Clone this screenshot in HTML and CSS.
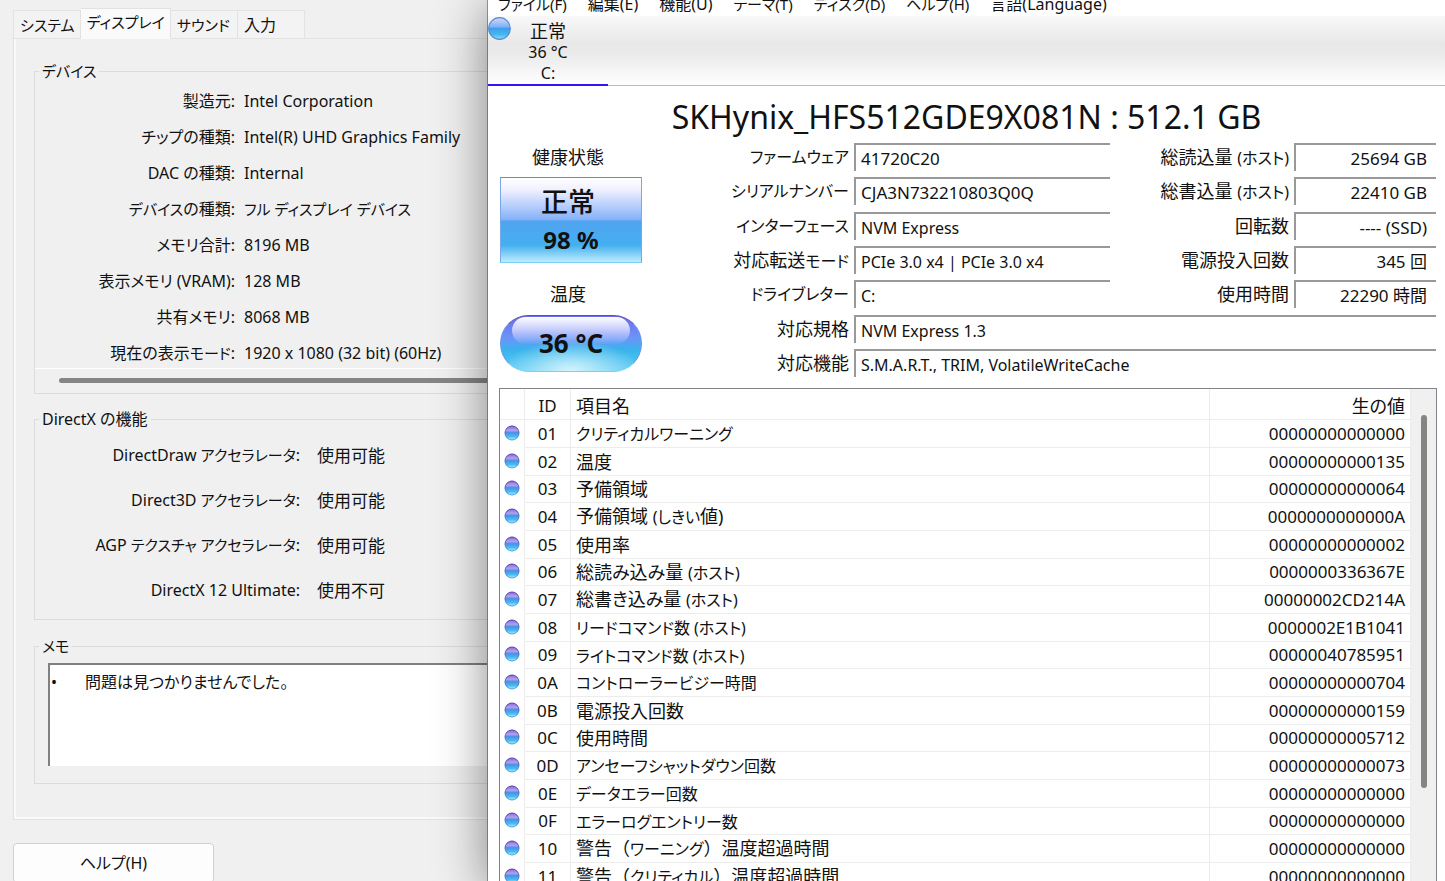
FILE: index.html
```html
<!DOCTYPE html>
<html lang="ja">
<head>
<meta charset="utf-8">
<title>SKHynix_HFS512GDE9X081N : 512.1 GB</title>
<link rel="stylesheet" href="styles.css">
</head>
<body>
<svg class="defs" aria-hidden="true">
  <defs>
    <linearGradient id="ball-fill" x1="0" y1="0" x2="0" y2="1">
      <stop offset="0" stop-color="#8a62dc"/>
      <stop offset="0.3" stop-color="#b0a4ec"/>
      <stop offset="0.48" stop-color="#4a90e4"/>
      <stop offset="0.75" stop-color="#46bcf2"/>
      <stop offset="1" stop-color="#b4ecfc"/>
    </linearGradient>
    <linearGradient id="ball-rim" x1="0" y1="0" x2="0" y2="1">
      <stop offset="0" stop-color="#5a3cb4"/>
      <stop offset="0.5" stop-color="#4a68c8"/>
      <stop offset="1" stop-color="#48a8e0"/>
    </linearGradient>
    <linearGradient id="orb-fill" x1="0" y1="0" x2="0" y2="1">
      <stop offset="0" stop-color="#d4d8fc"/>
      <stop offset="0.44" stop-color="#7cb0f4"/>
      <stop offset="0.48" stop-color="#3c9cec"/>
      <stop offset="0.78" stop-color="#48b8f0"/>
      <stop offset="1" stop-color="#8cdcf8"/>
    </linearGradient>
    <symbol id="ball" viewBox="0 0 16 16"><circle cx="8" cy="8" r="7" fill="url(#ball-fill)" stroke="url(#ball-rim)"/></symbol>
    <symbol id="orb" viewBox="0 0 22 22"><circle cx="11" cy="11" r="10.4" fill="url(#orb-fill)" stroke="#5a88d0"/></symbol>
  </defs>
</svg>
<div class="desktop">
  <main class="dxdiag">
    <div class="tabs" role="tablist">
      <button class="tab kana-s" role="tab">システム</button>
      <button class="tab tab-active kana-s" role="tab" aria-selected="true">ディスプレイ</button>
      <button class="tab kana-s" role="tab">サウンド</button>
      <button class="tab" role="tab">入力</button>
    </div>
    <div class="panel" role="tabpanel">
      <fieldset class="group group-device">
        <legend class="kana-s">デバイス</legend>
        <dl class="pairs device-list">
          <dt>製造元:</dt><dd>Intel Corporation</dd>
          <dt>チップの種類:</dt><dd>Intel(R) UHD Graphics Family</dd>
          <dt>DAC の種類:</dt><dd>Internal</dd>
          <dt><span class="kana-s">デバイス</span>の種類:</dt><dd class="kana-s">フル ディスプレイ デバイス</dd>
          <dt>メモリ合計:</dt><dd>8196 MB</dd>
          <dt>表示メモリ (VRAM):</dt><dd>128 MB</dd>
          <dt>共有メモリ:</dt><dd>8068 MB</dd>
          <dt>現在の表示<span class="kana-s">モード</span>:</dt><dd>1920 x 1080 (32 bit) (60Hz)</dd>
        </dl>
        <div class="hscroll"><div class="hscroll-thumb"></div></div>
      </fieldset>
      <fieldset class="group group-directx">
        <legend>DirectX の機能</legend>
        <dl class="pairs directx-list">
          <dt>DirectDraw <span class="kana-s">アクセラレータ</span>:</dt><dd>使用可能</dd>
          <dt>Direct3D <span class="kana-s">アクセラレータ</span>:</dt><dd>使用可能</dd>
          <dt>AGP <span class="kana-s">テクスチャ アクセラレータ</span>:</dt><dd>使用可能</dd>
          <dt>DirectX 12 Ultimate:</dt><dd>使用不可</dd>
        </dl>
      </fieldset>
      <fieldset class="group group-memo">
        <legend class="kana-s">メモ</legend>
        <div class="memo-wrap"><textarea class="memo" readonly aria-label="メモ">•&#9;問題は見つかりませんでした。</textarea></div>
      </fieldset>
    </div>
    <button class="help">ヘルプ(H)</button>
  </main>

  <section class="diskinfo">
    <nav class="menu">
      <button class="kana-s">ファイル(F)</button><button>編集(E)</button><button>機能(U)</button><button class="kana-s">テーマ(T)</button><button class="kana-s">ディスク(D)</button><button class="kana-s">ヘルプ(H)</button><button>言語(Language)</button>
    </nav>
    <div class="drives">
      <button class="drive">
        <svg class="orb" aria-hidden="true"><use href="#orb"/></svg>
        <span class="drive-text"><span class="drive-state">正常</span><span>36 °C</span><span>C:</span></span>
      </button>
    </div>
    <h1 class="model">SKHynix_HFS512GDE9X081N : 512.1 GB</h1>
    <div class="summary">
      <div class="status">
        <span class="status-label">健康状態</span>
        <button class="health"><span class="health-word">正常</span><span>98 %</span></button>
        <span class="status-label temp-label">温度</span>
        <button class="temp"><span class="temp-text">36 °C</span></button>
      </div>
      <div class="specs">
        <label class="kana" for="fw">ファームウェア</label><input id="fw" class="code" readonly value="41720C20">
        <label for="rd">総読込量 <span class="kana">(ホスト)</span></label><input id="rd" class="num" readonly value="25694 GB">
        <label class="kana" for="sn">シリアルナンバー</label><input id="sn" class="code" readonly value="CJA3N732210803Q0Q">
        <label for="wr">総書込量 <span class="kana">(ホスト)</span></label><input id="wr" class="num" readonly value="22410 GB">
        <label class="kana" for="if">インターフェース</label><input id="if" readonly value="NVM Express">
        <label for="rpm">回転数</label><input id="rpm" class="num" readonly value="---- (SSD)">
        <label for="tm">対応転送<span class="kana">モード</span></label><input id="tm" readonly value="PCIe 3.0 x4 | PCIe 3.0 x4">
        <label for="pc">電源投入回数</label><input id="pc" class="num" readonly value="345 回">
        <label class="kana" for="dl">ドライブレター</label><input id="dl" readonly value="C:">
        <label for="ph">使用時間</label><input id="ph" class="num" readonly value="22290 時間">
        <label for="std">対応規格</label><input id="std" class="wide" readonly value="NVM Express 1.3">
        <label for="ft">対応機能</label><input id="ft" class="wide" readonly value="S.M.A.R.T., TRIM, VolatileWriteCache">
      </div>
    </div>
    <div class="smart">
      <table class="attrs">
        <colgroup><col class="c-icon"><col class="c-id"><col><col class="c-raw"></colgroup>
        <thead><tr><th></th><th class="id">ID</th><th>項目名</th><th class="raw">生の値</th></tr></thead>
        <tbody>
          <tr><td><svg class="ball"><use href="#ball"/></svg></td><td class="id">01</td><td><span class="kana">クリティカルワーニング</span></td><td class="raw">00000000000000</td></tr>
          <tr><td><svg class="ball"><use href="#ball"/></svg></td><td class="id">02</td><td>温度</td><td class="raw">00000000000135</td></tr>
          <tr><td><svg class="ball"><use href="#ball"/></svg></td><td class="id">03</td><td>予備領域</td><td class="raw">00000000000064</td></tr>
          <tr><td><svg class="ball"><use href="#ball"/></svg></td><td class="id">04</td><td>予備領域 <span class="kana">(しきい</span>値)</td><td class="raw">0000000000000A</td></tr>
          <tr><td><svg class="ball"><use href="#ball"/></svg></td><td class="id">05</td><td>使用率</td><td class="raw">00000000000002</td></tr>
          <tr><td><svg class="ball"><use href="#ball"/></svg></td><td class="id">06</td><td>総読み込み量 <span class="kana">(ホスト)</span></td><td class="raw">0000000336367E</td></tr>
          <tr><td><svg class="ball"><use href="#ball"/></svg></td><td class="id">07</td><td>総書き込み量 <span class="kana">(ホスト)</span></td><td class="raw">00000002CD214A</td></tr>
          <tr><td><svg class="ball"><use href="#ball"/></svg></td><td class="id">08</td><td><span class="kana">リードコマンド数 (ホスト)</span></td><td class="raw">0000002E1B1041</td></tr>
          <tr><td><svg class="ball"><use href="#ball"/></svg></td><td class="id">09</td><td><span class="kana">ライトコマンド数 (ホスト)</span></td><td class="raw">00000040785951</td></tr>
          <tr><td><svg class="ball"><use href="#ball"/></svg></td><td class="id">0A</td><td><span class="kana">コントローラービジー時間</span></td><td class="raw">00000000000704</td></tr>
          <tr><td><svg class="ball"><use href="#ball"/></svg></td><td class="id">0B</td><td>電源投入回数</td><td class="raw">00000000000159</td></tr>
          <tr><td><svg class="ball"><use href="#ball"/></svg></td><td class="id">0C</td><td>使用時間</td><td class="raw">00000000005712</td></tr>
          <tr><td><svg class="ball"><use href="#ball"/></svg></td><td class="id">0D</td><td><span class="kana">アンセーフシャットダウン回数</span></td><td class="raw">00000000000073</td></tr>
          <tr><td><svg class="ball"><use href="#ball"/></svg></td><td class="id">0E</td><td><span class="kana">データエラー回数</span></td><td class="raw">00000000000000</td></tr>
          <tr><td><svg class="ball"><use href="#ball"/></svg></td><td class="id">0F</td><td><span class="kana">エラーログエントリー数</span></td><td class="raw">00000000000000</td></tr>
          <tr><td><svg class="ball"><use href="#ball"/></svg></td><td class="id">10</td><td class="full">警告（<span class="kana">ワーニング</span>）温度超過時間</td><td class="raw">00000000000000</td></tr>
          <tr><td><svg class="ball"><use href="#ball"/></svg></td><td class="id">11</td><td class="full">警告（<span class="kana">クリティカル</span>）温度超過時間</td><td class="raw">00000000000000</td></tr>
        </tbody>
      </table>
      <div class="vscroll"><div class="vscroll-thumb"></div></div>
    </div>
  </section>
</div>
</body>
</html>
```
FILE: styles.css
```css
* { box-sizing: border-box; }
body {
  margin: 0;
  background: #f0f0f0;
  color: #111;
  font: 16px/24px "Noto Sans", "Noto Sans CJK JP", sans-serif;
  font-feature-settings: "palt";
}
button, input, textarea {
  font: inherit;
  font-feature-settings: inherit;
  color: inherit;
  margin: 0;
  padding: 0;
  border: 0;
  border-radius: 0;
  background: none;
  outline: 0;
}
.kana, .specs .kana { font-size: 16px; font-feature-settings: "palt"; }
.kana-s { font-size: 15px; }
.defs { position: absolute; width: 0; height: 0; }
.desktop {
  display: grid;
  grid-template-columns: 488fr 957fr;
  height: 100vh;
  overflow: hidden;
}

/* DirectX diagnostics window */
.dxdiag { min-width: 0; padding: 8px 0 0 13px; white-space: nowrap; }
.tabs { display: flex; align-items: flex-end; height: 31px; margin-bottom: -1px; }
.tab {
  height: 29px;
  min-width: 67px;
  padding: 0 5px 0 6px;
  border: 1px solid #e2e2e2;
  border-left-width: 0;
  background: #f3f3f3;
  text-align: left;
}
.tab:first-child { border-left-width: 1px; }
.tab-active { height: 31px; padding-bottom: 4px; border-bottom: 0; background: #fafafa; }
.panel {
  padding: 20px 0 35px 20px;
  border: 1px solid #e2e2e2;
  border-right: 0;
  box-shadow: inset 2px -2px 0 #f9f9f9;
}
.group {
  min-width: 0;
  margin: 0;
  padding: 0;
  border: 1px solid #dcdcdc;
  border-right: 0;
}
.group legend { margin-left: 4px; padding: 0 3px; }
.group-device { height: 335px; }
.group-directx { height: 213px; margin-top: 13px; }
.group-memo { height: 150px; margin-top: 14px; }
.memo-wrap { padding: 5px 0 0 13px; }
.pairs { display: grid; margin: 0; }
.pairs dt { text-align: right; }
.pairs dd { margin: 0; }
.device-list {
  grid-template-columns: 200px 1fr;
  column-gap: 9px;
  height: 285px;
  align-content: space-between;
  line-height: 36px;
}
.directx-list { grid-template-columns: 265px 1fr; column-gap: 17px; line-height: 45px; padding-top: 2px; }
.directx-list dd { font-size: 17px; }
.hscroll { padding: 9px 0 0 24px; border-top: 1px solid #fff; }
.hscroll-thumb { height: 5px; border-radius: 3px 0 0 3px; background: #858585; }
.memo {
  display: block;
  width: 100%;
  height: 103px;
  padding: 5px 1px;
  border: solid #808080;
  border-width: 2px 0 0 2px;
  background: #fff;
  resize: none;
  tab-size: 34px;
  overflow: hidden;
}
.help {
  width: 201px;
  height: 40px;
  margin-top: 23px;
  border: 1px solid #d0d0d0;
  border-radius: 4px;
  background: #fdfdfd;
}

/* Disk information window */
.diskinfo {
  display: flex;
  flex-direction: column;
  min-width: 0;
  height: 100vh;
  background: #fff;
  box-shadow: 0 8px 48px rgba(0, 0, 0, 0.48), -1px 0 0 #a0a0a0;
  z-index: 1;
}
.menu { display: flex; flex: none; gap: 21px; height: 24px; margin-top: -8px; padding-left: 10px; white-space: nowrap; }
.drives {
  flex: none;
  height: 70px;
  border-bottom: 1px solid #bcbcbc;
  background: linear-gradient(#f8f8f8, #e8e8e8 40%, #eaeaea 55%, #fff);
}
.drive { display: block; position: relative; width: 120px; height: 70px; border-bottom: 2px solid #3a10f4; }
.orb { position: absolute; left: 0; top: 1px; width: 23px; height: 23px; }
.drive-text { display: flex; flex-direction: column; padding-top: 5px; line-height: 21px; }
.drive-state { font-size: 18px; }
.model { flex: none; margin: 8px 0 0; text-align: center; font-size: 32px; font-weight: 400; line-height: 45px; white-space: nowrap; }
.summary { display: flex; flex: none; gap: 13px; padding: 4px 9px 0 12px; }
.status { display: flex; flex-direction: column; flex: none; width: 142px; text-align: center; }
.status-label { padding-right: 6px; font-size: 18px; line-height: 28px; }
.temp-label { margin-top: 17px; }
.health {
  display: flex;
  flex-direction: column;
  height: 86px;
  margin-top: 6px;
  padding-top: 5px;
  border: 1px solid;
  border-color: #7f7fd0 #78a8e8 #78d0f4;
  background: linear-gradient(#fff 0, #f0f0ff 14%, #84b0f8 50%, #50a4f0 51%, #44b0f0 80%, #c0ecfc);
  align-items: center;
  font-size: 24px;
  font-weight: 700;
  line-height: 38px;
}
.health-word { padding-right: 6px; font-size: 27px; font-weight: 500; }
.temp {
  position: relative;
  height: 57px;
  margin-top: 7px;
  border: 1px solid;
  border-color: #5c50a8 #6898e8 #78d0f4;
  border-radius: 29px;
  background:
    radial-gradient(ellipse 50% 55% at 50% 100%, #d4f4fc, rgba(160, 228, 250, 0) 100%),
    linear-gradient(#6c6cf0, #6c94f8 40%, #38b4ec 62%, #60ccf4);
}
.temp::before {
  content: "";
  position: absolute;
  inset: 1px 11px auto;
  height: 27px;
  border-radius: 14px;
  background: linear-gradient(#fff, rgba(216, 220, 254, 0.85) 45%, rgba(120, 190, 248, 0.1));
}
.temp-text { position: relative; font-size: 26px; font-weight: 700; line-height: 53px; }
.specs {
  display: grid;
  flex: 1;
  grid-template-columns: 194px 256fr 174px 142fr;
  grid-auto-rows: 28px;
  column-gap: 5px;
  height: 234px;
  align-content: space-between;
}
.specs label { font-size: 18px; line-height: 28px; text-align: right; white-space: nowrap; }
.specs label.kana { font-size: 16px; }
.specs input {
  min-width: 0;
  width: 100%;
  padding: 2px 9px 0 5px;
  border: solid #999;
  border-width: 2px 0 0 2px;
}
.specs .code, .specs .num { font-size: 17px; }
.specs .num { text-align: right; }
.specs .wide { grid-column: 2 / -1; }
.smart {
  display: flex;
  flex: 1;
  align-items: stretch;
  min-height: 0;
  margin: 11px 8px 0 11px;
  border: 1px solid #82828a;
  border-bottom: 0;
  overflow: hidden;
}
.attrs { flex: 1; align-self: flex-start; border-collapse: separate; border-spacing: 0; table-layout: fixed; width: 100%; }
.c-icon { width: 25px; }
.c-id { width: 46px; }
.c-raw { width: 201px; }
.attrs th, .attrs td {
  height: 28px;
  padding: 0 5px;
  border: solid #ececec;
  border-width: 0 1px 1px 0;
  font-size: 18px;
  font-weight: 400;
  line-height: 24px;
  text-align: left;
  white-space: nowrap;
}
.attrs th { height: 31px; padding-top: 3px; border-bottom-width: 1px; }
.attrs tr:nth-child(3n) td { height: 27px; }
.attrs td:first-child { padding: 0 4px 2px; border-bottom-color: #fff; }
.attrs .id { text-align: center; font-size: 17px; }
.attrs td.raw { font-size: 17px; }
.attrs .raw { text-align: right; }
.attrs .full { font-feature-settings: normal; }
.ball { display: block; width: 16px; height: 16px; }
.vscroll { flex: none; width: 25px; padding: 26px 9px 0 10px; background: #f0f0f0; }
.vscroll-thumb { height: 80%; border-radius: 3px; background: #858585; }
```
